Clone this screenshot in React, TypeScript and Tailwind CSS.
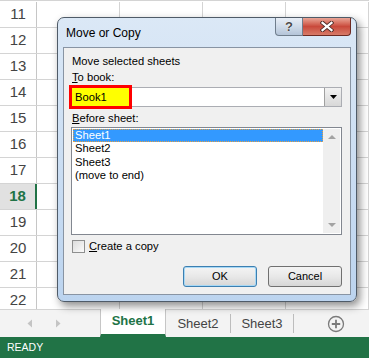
import React from "react";

const rows = [11, 12, 13, 14, 15, 16, 17, 18, 19, 20, 21, 22];

function Grid() {
  return (
    <div className="h-[309px] overflow-hidden border-t border-[#d4d4d4] pt-px">
      {rows.map((n) => {
        const active = n === 18;
        return (
          <div key={n} className="flex h-[26px] border-b border-[#d4d4d4]">
            <div
              className={
                active
                  ? "flex w-[37px] items-center justify-center border-r-2 border-[#217346] bg-[#e1e1e1] text-[15px] font-bold text-[#217346]"
                  : "flex w-[37px] items-center justify-center border-r border-[#c6c6c6] text-[15px] text-[#444444]"
              }
            >
              {n}
            </div>
            <div className="w-[83px] border-r border-[#d4d4d4]" />
            <div className="w-[83px] border-r border-[#d4d4d4]" />
            <div className="w-[83px] border-r border-[#d4d4d4]" />
            <div className="w-[83px] border-r border-[#d4d4d4]" />
          </div>
        );
      })}
    </div>
  );
}

function SheetTabs() {
  return (
    <div className="flex h-[28px] items-stretch border-t border-[#d4d4d4] bg-[#f3f3f3]">
      <div className="flex w-[100px] items-center gap-[22px] pl-[27px]">
        <svg width="6" height="9" viewBox="0 0 6 9">
          <path d="M5 0.5 L0.5 4.5 L5 8.5 Z" fill="#c4c4c4" />
        </svg>
        <svg width="6" height="9" viewBox="0 0 6 9">
          <path d="M1 0.5 L5.5 4.5 L1 8.5 Z" fill="#c4c4c4" />
        </svg>
      </div>
      <div className="-mt-px flex w-[66px] items-center justify-center border-x border-[#c6c6c6] border-b-[3px] border-b-[#217346] bg-white pb-[1px] text-[13px] font-bold text-[#217346]">
        Sheet1
      </div>
      <div className="my-[4px] flex w-[65px] items-center justify-center border-r border-[#bdbdbd] text-[13px] text-[#444444]">
        Sheet2
      </div>
      <div className="my-[4px] flex w-[63px] items-center justify-center border-r border-[#bdbdbd] text-[13px] text-[#444444]">
        Sheet3
      </div>
      <div className="flex flex-1 items-center justify-end pr-[24px]">
        <svg width="18" height="18" viewBox="0 0 18 18">
          <circle cx="9" cy="9" r="7.5" fill="none" stroke="#7a7a7a" strokeWidth="1.3" />
          <path d="M9 4.8 V13.2 M4.8 9 H13.2" stroke="#7a7a7a" strokeWidth="1.8" />
        </svg>
      </div>
    </div>
  );
}

function TitleButtons() {
  return (
    <div className="ml-auto flex self-start">
      <div className="flex h-[18px] w-[28px] items-center justify-center rounded-bl-[4px] border border-t-0 border-[#6f7d8c] bg-gradient-to-b from-[#e8eef6] via-[#cfdbe9] to-[#b4c4d8]">
        <span className="text-[13px] font-bold leading-none text-[#4a4a4a] [text-shadow:0_0_1px_#fff,0_0_1px_#fff]">
          ?
        </span>
      </div>
      <div className="flex h-[18px] w-[48px] items-center justify-center rounded-br-[4px] border border-l-0 border-t-0 border-[#6d2a22] bg-gradient-to-b from-[#e9a597] via-[#c9493b] to-[#d77a68]">
        <svg width="14" height="11" viewBox="0 0 14 11">
          <path d="M2.5 1.8 L11.5 9.2 M11.5 1.8 L2.5 9.2" stroke="#4a2a26" strokeWidth="4" strokeLinecap="square" />
          <path d="M2.5 1.8 L11.5 9.2 M11.5 1.8 L2.5 9.2" stroke="#ffffff" strokeWidth="2.2" strokeLinecap="square" />
        </svg>
      </div>
    </div>
  );
}

function Dialog() {
  return (
    <div className="absolute left-[57px] top-[17px] flex h-[285px] w-[300px] flex-col rounded-[7px] border border-[#4f5b68] bg-gradient-to-b from-[#dbe8f6] to-[#bcd4ef] px-[5px] pb-[6px] shadow-[3px_4px_9px_rgba(0,0,0,0.45)]">
      <div className="flex h-[29px] items-center">
        <span className="pl-[3px] text-[12px] text-black">Move or Copy</span>
        <TitleButtons />
      </div>
      <div className="flex flex-1 flex-col border border-[#8894a3] bg-[#f0f0f0] px-[8px] pt-[6px] text-[11.2px] text-black">
        <div className="h-[14px] leading-[14px]">Move selected sheets</div>
        <div className="mt-[2px] h-[14px] leading-[14px]">
          <span className="underline">T</span>o book:
        </div>
        <div className="relative -ml-px mt-[3px] flex h-[20px] border border-[#abadb3] bg-white">
          <div className="absolute -left-[3px] -top-[3px] flex h-[24px] w-[63px] items-center border-[3px] border-[#ff0000] bg-[#ffff00] pl-[3px] text-black">
            Book1
          </div>
          <div className="ml-auto flex w-[17px] items-center justify-center border-l border-[#a0a0a0] bg-gradient-to-b from-[#f2f2f2] to-[#d8d8d8]">
            <svg width="7" height="4" viewBox="0 0 7 4">
              <path d="M0 0 H7 L3.5 4 Z" fill="#000" />
            </svg>
          </div>
        </div>
        <div className="mt-[4px] h-[14px] leading-[14px]">
          <span className="underline">B</span>efore sheet:
        </div>
        <div className="-ml-px mt-[2px] flex h-[108px] border border-[#828790] bg-white p-px">
          <div className="flex flex-1 flex-col">
            <div className="h-[13.3px] bg-[#3399ff] pl-[2px] leading-[13px] text-white outline outline-1 -outline-offset-1 outline-dotted outline-[#e8a040]">
              Sheet1
            </div>
            <div className="h-[13.3px] pl-[2px] leading-[13px]">Sheet2</div>
            <div className="h-[13.3px] pl-[2px] leading-[13px]">Sheet3</div>
            <div className="h-[13.3px] pl-[2px] leading-[13px]">(move to end)</div>
          </div>
          <div className="flex w-[17px] flex-col items-center justify-between bg-[#efefef] py-[6px]">
            <svg width="8" height="4" viewBox="0 0 8 4">
              <path d="M0 4 H8 L4 0 Z" fill="#a3a3a3" />
            </svg>
            <svg width="8" height="4" viewBox="0 0 8 4">
              <path d="M0 0 H8 L4 4 Z" fill="#a3a3a3" />
            </svg>
          </div>
        </div>
        <div className="mt-[4px] flex h-[14px] items-center">
          <div className="h-[13px] w-[13px] border border-[#8e8f8f] bg-gradient-to-br from-[#dcdcdc] to-[#fbfbfb]" />
          <span className="ml-[4px] leading-[14px]">
            <span className="underline">C</span>reate a copy
          </span>
        </div>
        <div className="mt-[13px] flex justify-end gap-[11px]">
          <div className="flex h-[21px] w-[74px] items-center justify-center rounded-[3px] border border-[#3c7fb1] bg-gradient-to-b from-[#f4f4f4] via-[#e8e8e8] to-[#d6d6d6] text-[11px] shadow-[inset_0_0_0_1px_#a7d8f5]">
            OK
          </div>
          <div className="flex h-[21px] w-[74px] items-center justify-center rounded-[3px] border border-[#707070] bg-gradient-to-b from-[#f4f4f4] via-[#e8e8e8] to-[#d6d6d6] text-[11px]">
            Cancel
          </div>
        </div>
      </div>
    </div>
  );
}

export default function App() {
  return (
    <div className="relative h-[358px] w-[369px] overflow-hidden bg-white font-['Liberation_Sans',Arial,sans-serif]">
      <Grid />
      <SheetTabs />
      <div className="flex h-[21px] items-center bg-[#217346] pl-[7px] text-[10.5px] text-white">
        READY
      </div>
      <Dialog />
    </div>
  );
}
